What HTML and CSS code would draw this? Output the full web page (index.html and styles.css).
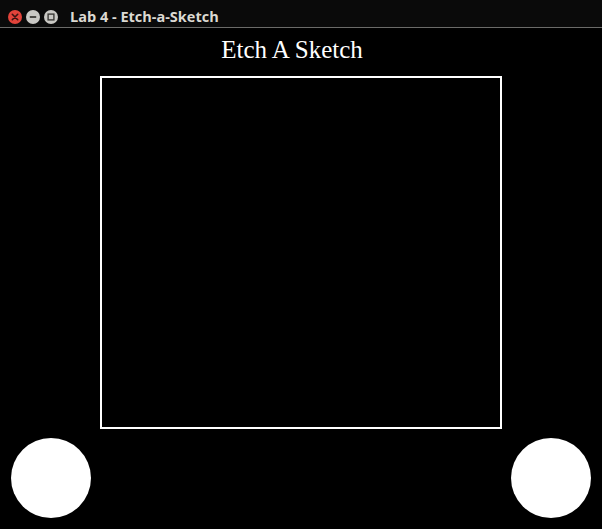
FILE: index.html
```html
<!DOCTYPE html>
<html>
<head>
<meta charset="utf-8">
<link rel="stylesheet" href="styles.css">
</head>
<body>
<div class="window">
  <div class="titlebar">
    <div class="controls">
      <svg class="btn" width="14" height="14" viewBox="0 0 14 14"><circle cx="7" cy="7" r="7" fill="#e2433a"/><path d="M4.3 4.3L9.7 9.7M9.7 4.3L4.3 9.7" stroke="#3a1210" stroke-width="1.6" stroke-linecap="round"/></svg>
      <svg class="btn" width="14" height="14" viewBox="0 0 14 14"><circle cx="7" cy="7" r="7" fill="#c9c8c4"/><path d="M3.8 7H10.2" stroke="#3b3a37" stroke-width="1.8"/></svg>
      <svg class="btn" width="14" height="14" viewBox="0 0 14 14"><circle cx="7" cy="7" r="7" fill="#c9c8c4"/><rect x="4.1" y="4.1" width="5.8" height="5.8" fill="none" stroke="#3b3a37" stroke-width="1.4"/></svg>
    </div>
    <div class="title">Lab 4 - Etch-a-Sketch</div>
  </div>
  <div class="canvas">
    <h1 class="heading">Etch A Sketch</h1>
    <div class="board"></div>
    <div class="knobs">
      <div class="knob"></div>
      <div class="knob"></div>
    </div>
  </div>
</div>
</body>
</html>
```
FILE: styles.css
```css
html, body {
  margin: 0;
  padding: 0;
  background: #000;
  width: 602px;
  height: 529px;
  overflow: hidden;
}
.window {
  width: 602px;
  height: 529px;
  display: flex;
  flex-direction: column;
}
.titlebar {
  height: 27px;
  background: #0a0a0a;
  border-bottom: 1px solid #6b6b69;
  display: flex;
  align-items: center;
  box-sizing: content-box;
}
.controls {
  display: flex;
  gap: 4px;
  padding-left: 8px;
  padding-top: 6px;
}
.btn {
  display: block;
}
.title {
  margin-left: 12px;
  padding-top: 6px;
  font-family: "Open Sans", "DejaVu Sans", sans-serif;
  font-weight: 700;
  font-size: 14.5px;
  color: #dcd9d2;
  letter-spacing: 0;
}
.canvas {
  flex: 1;
  display: flex;
  flex-direction: column;
  align-items: center;
  position: relative;
}
.heading {
  margin: 0;
  margin-top: 7px;
  font-family: "Liberation Serif", serif;
  font-weight: 400;
  font-size: 25px;
  line-height: 29px;
  color: #fff;
  padding-right: 18px;
}
.board {
  margin-top: 12px;
  width: 398px;
  height: 349px;
  border: 2px solid #fff;
  align-self: flex-start;
  margin-left: 100px;
}
.knobs {
  align-self: stretch;
  display: flex;
  justify-content: space-between;
  padding: 0 11px 0 11px;
  margin-top: 9px;
}
.knob {
  width: 80px;
  height: 80px;
  border-radius: 50%;
  background: #fff;
}
```
